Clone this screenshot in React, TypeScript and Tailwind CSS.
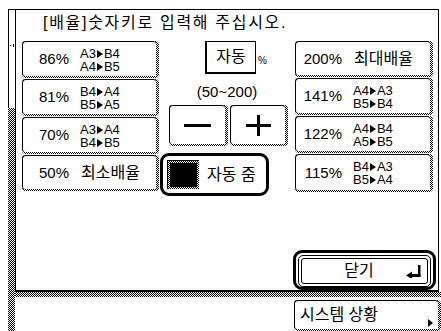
import React from 'react';

const DITHER = 'bg-[image:repeating-conic-gradient(#000_0_25%,#fff_0_50%)] bg-[length:2px_2px]';

const Tri = () => (
  <span className="inline-block w-0 h-0 border-y-[4px] border-y-transparent border-l-[6px] border-l-black mx-[1px] align-[0px]" />
);

function Btn({ className = '', children }: { className?: string; children?: React.ReactNode }) {
  return (
    <div className={`${DITHER} rounded-[4px] pr-[3px] pb-[2px] ${className}`}>
      <div className="relative h-full bg-white border-l border-t border-black rounded-tl-[4px] rounded-tr-[3px] rounded-bl-[3px] flex items-center">
        {children}
      </div>
    </div>
  );
}

function RatioBtn({ pct, a, b, label, h = 'h-[37px]' }: { pct: string; a?: [string, string]; b?: [string, string]; label?: string; h?: string }) {
  return (
    <Btn className={h}>
      <span className="w-[46px] text-right text-[15px] leading-[16px]">{pct}</span>
      {label ? (
        <span className="ml-[12px] text-[16px] leading-[18px]">{label}</span>
      ) : (
        <div className="ml-[11px] text-[13px] leading-[13px] pt-[1px]">
          <div className="h-[13px]">{a![0]}<Tri />{a![1]}</div>
          <div className="h-[13px]">{b![0]}<Tri />{b![1]}</div>
        </div>
      )}
    </Btn>
  );
}

export default function App() {
  return (
    <div className="w-[441px] h-[331px] bg-white flex overflow-hidden text-black font-['Liberation_Sans','Noto_Sans_CJK_KR',sans-serif]">
      <div className="w-[8px] shrink-0" />
      {/* left scroll strip */}
      <div className="w-[7px] shrink-0 flex flex-col pt-[9px]">
        <div className="relative h-[99px] border-l border-t border-black">
          <div className="absolute left-[1px] top-[35px] w-[1px] h-[1px] bg-black" />
          <div className="absolute left-[4px] top-[34px] w-[1px] h-[3px] bg-black" />
        </div>
        <div className={`flex-1 ${DITHER}`} />
      </div>

      <div className="flex-1 flex flex-col pt-[9px]">
        {/* main panel */}
        <div className="h-[283px] border-t border-l border-r border-b-2 border-black mr-[2px] flex flex-col">
          <div className="h-[31px] pl-[27px] pt-[3px] text-[16px] leading-[20px] tracking-[1.7px]">
            [배율]숫자키로 입력해 주십시오.
          </div>

          <div className="flex pl-[6px]">
            <div className="w-[137px] flex flex-col gap-[1px]">
              <RatioBtn pct="86%" a={['A3', 'B4']} b={['A4', 'B5']} />
              <RatioBtn pct="81%" a={['B4', 'A4']} b={['B5', 'A5']} />
              <RatioBtn pct="70%" a={['A3', 'A4']} b={['B4', 'B5']} />
              <RatioBtn pct="50%" label="최소배율" h="h-[36px]" />
            </div>

            <div className="w-[136px] flex flex-col">
              <div className="h-[33px] flex pl-[46px]">
                <div className="w-[51px] h-[33px] border-t border-r border-l-2 border-b-2 border-black flex items-center justify-center text-[16px] leading-[18px]">
                  자동
                </div>
                <span className="ml-[2px] mt-[14px] text-[10px] leading-[12px]">%</span>
              </div>
              <div className="mt-[10px] h-[16px] text-center text-[15px] leading-[16px]">(50~200)</div>
              <div className="mt-[5px] flex pl-[10px] gap-[2px]">
                <Btn className="w-[59px] h-[41px]">
                  <div className="w-full flex justify-center">
                    <div className="w-[27px] h-[3px] bg-black" />
                  </div>
                </Btn>
                <Btn className="w-[58px] h-[41px]">
                  <div className="w-full flex justify-center">
                    <svg width="25" height="21" viewBox="0 0 25 21">
                      <rect x="0" y="9" width="25" height="3" fill="#000" />
                      <rect x="11" y="0" width="3" height="21" fill="#000" />
                    </svg>
                  </div>
                </Btn>
              </div>
              <div className="mt-[7px] ml-[1px] w-[109px] h-[43px] border-[3px] border-black rounded-[9px] flex items-center pl-[4px]">
                <div className={`${DITHER} border-l border-t border-black p-[2px]`}>
                  <div className="w-[27px] h-[24px] bg-black" />
                </div>
                <span className="ml-[8px] text-[16px] leading-[18px]">자동 줌</span>
              </div>
            </div>

            <div className="w-[138px] flex flex-col gap-[1px]">
              <RatioBtn pct="200%" label="최대배율" h="h-[36px]" />
              <RatioBtn pct="141%" a={['A4', 'A3']} b={['B5', 'B4']} />
              <RatioBtn pct="122%" a={['A4', 'B4']} b={['A5', 'B5']} />
              <RatioBtn pct="115%" a={['B4', 'A3']} b={['B5', 'A4']} h="h-[38px]" />
            </div>
          </div>

          <div className="flex-1" />

          <div className="flex justify-end pr-[2px]">
            <div className="w-[143px] h-[40px] border-[3px] border-black rounded-[9px] p-[2px] pb-0">
              <div className="h-full border border-black rounded-[5px] p-[2px]">
                <div className="h-full border border-black rounded-[3px] flex items-center">
                  <span className="flex-1 text-center text-[16px] leading-[18px] pl-[10px]">닫기</span>
                  <svg className="mr-[5px]" width="16" height="13" viewBox="0 0 16 13">
                    <rect x="12" y="0" width="2.5" height="12" fill="#000" />
                    <rect x="5" y="9" width="9.5" height="3" fill="#000" />
                    <polygon points="0,10.5 6,6.5 6,14" fill="#000" />
                  </svg>
                </div>
              </div>
            </div>
          </div>
        </div>

        <div className={`h-[5px] ${DITHER}`} />

        <div className="flex justify-end pt-[3px]">
          <Btn className="w-[147px] h-[31px]">
            <span className="pl-[5px] text-[16px] leading-[18px]">시스템 상황</span>
            <span className="absolute right-[5px] bottom-[2px] w-0 h-0 border-y-[4px] border-y-transparent border-l-[5px] border-l-black" />
          </Btn>
        </div>
      </div>
    </div>
  );
}
